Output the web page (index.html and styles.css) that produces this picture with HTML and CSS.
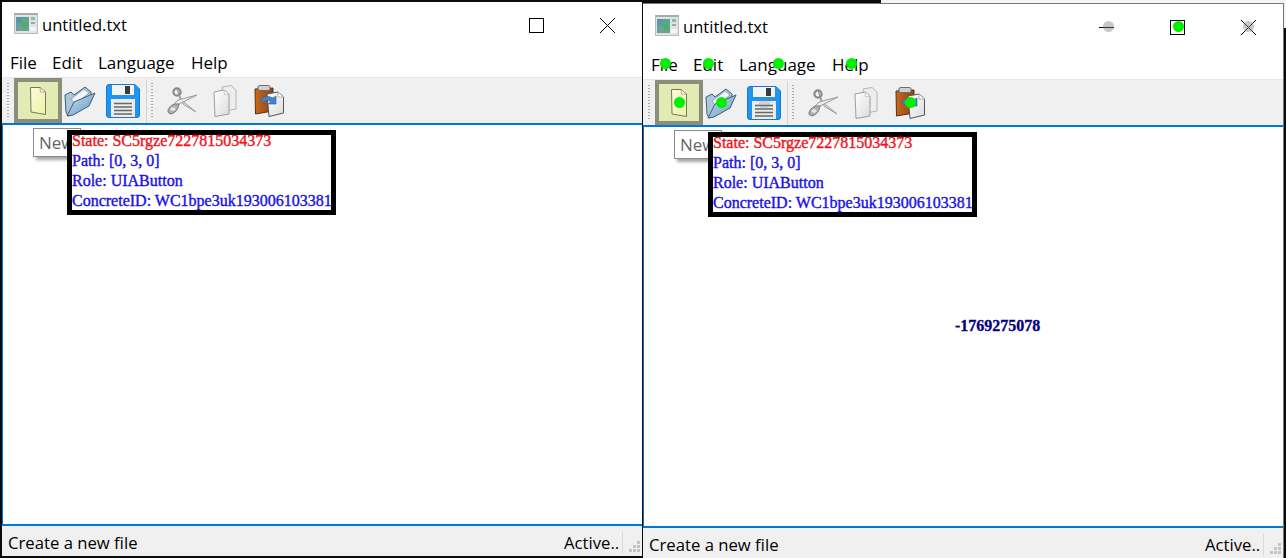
FILE: index.html
```html
<!DOCTYPE html>
<html lang="en">
<head>
<meta charset="utf-8">
<title>untitled.txt</title>
<link rel="stylesheet" href="styles.css">
</head>
<body>
<svg class="defs" width="0" height="0" aria-hidden="true">
  <defs>
    <linearGradient id="gDoc" x1="0" y1="0" x2="1" y2="1"><stop offset="0" stop-color="#fbfbd8"/><stop offset="1" stop-color="#eef0a8"/></linearGradient>
    <linearGradient id="gFolder" x1="0" y1="0" x2="1" y2="1"><stop offset="0" stop-color="#cfe3f0"/><stop offset="1" stop-color="#5f97bf"/></linearGradient>
    <linearGradient id="gWhite" x1="0" y1="0" x2="1" y2="1"><stop offset="0" stop-color="#ffffff"/><stop offset="1" stop-color="#dcdcdc"/></linearGradient>
    <linearGradient id="gWood" x1="0" y1="0" x2="1" y2="0"><stop offset="0" stop-color="#c9691f"/><stop offset="1" stop-color="#8a4316"/></linearGradient>
    <symbol id="i-app" viewBox="0 0 24 21">
      <rect x="0.5" y="0.5" width="23" height="20" fill="#dfe3e3" stroke="#b9bfbf"/>
      <rect x="0" y="0" width="24" height="2" fill="#a5adad"/>
      <rect x="2" y="4" width="13" height="14" fill="#5fa58f"/>
      <rect x="2" y="4" width="6" height="6" fill="#5a97a8"/>
      <rect x="8" y="9" width="5" height="6" fill="#4fae65"/>
      <rect x="4" y="13" width="5" height="5" fill="#7d9c9a"/>
      <rect x="17" y="4" width="4" height="3" fill="#8fbf9a"/>
      <rect x="17" y="9" width="4" height="2" fill="#a0a8a8"/>
      <rect x="16" y="14" width="6" height="4" fill="#f4f6f6"/>
    </symbol>
    <symbol id="i-new" viewBox="0 0 20 30">
      <path d="M2.5 1.5 L12 1.5 L17.5 6 L17.5 28.5 L3 26 Z" fill="url(#gDoc)" stroke="#77775a" stroke-width="1"/>
      <path d="M12 1.5 L12.5 6 L17.5 6 Z" fill="#fff" stroke="#9a9a80" stroke-width="0.8"/>
    </symbol>
    <symbol id="i-open" viewBox="0 0 32 32">
      <path d="M2 27 L1 10 L7 7 L10 10 L21 2 L27 7 L27 14 L10 29 L4 31 Z" fill="#a9c8dc" stroke="#3f5f77" stroke-width="1"/>
      <path d="M7 14 L20 4 L25 8 L11 19 Z" fill="#f4f7f9" stroke="#7f98a8" stroke-width="0.8"/>
      <path d="M3 31 L10 17 L31 8 L25 21 L9 30 Z" fill="url(#gFolder)" stroke="#3f5f77" stroke-width="1"/>
    </symbol>
    <symbol id="i-save" viewBox="0 0 34 34">
      <path d="M3 0.5 L29 0.5 L33.5 5 L33.5 31 Q33.5 33.5 31 33.5 L3 33.5 Q0.5 33.5 0.5 31 L0.5 3 Q0.5 0.5 3 0.5 Z" fill="#1f94f0" stroke="#1b78c8"/>
      <rect x="6" y="1" width="22" height="10" fill="#f3f3f3"/>
      <rect x="19" y="2" width="5" height="8" fill="#3a3a3a"/>
      <rect x="5" y="15" width="24" height="18" fill="#ececec"/>
      <path d="M8 19.5 H26 M8 23 H26 M8 26.500 H26 M8 30 H26" stroke="#666" stroke-width="1.4"/>
    </symbol>
    <symbol id="i-cut" viewBox="0 0 32 28">
      <path d="M11 1 L14 12 L30 25 L17 17 Z" fill="#e4e4e4" stroke="#9a9a9a"/>
      <path d="M31 8 L13 17 L6 19 L12 13 Z" fill="#eeeeee" stroke="#9a9a9a"/>
      <circle cx="11" cy="5" r="3.6" fill="none" stroke="#8a8a8a" stroke-width="2.2"/>
      <path d="M2 23 Q5 16 13 17 Q12 25 5 27 Q1 26 2 23 Z" fill="#b0b0b0" stroke="#7c7c7c"/>
      <ellipse cx="7" cy="22" rx="2.6" ry="1.8" fill="#e8e8e8"/>
    </symbol>
    <symbol id="i-copy" viewBox="0 0 24 32">
      <path d="M9 2 L18 0.5 L23 5 L23 24 L12 26 Z" fill="#ededed" stroke="#b4b4b4"/>
      <path d="M1 7 L11 5 L16 9 L16 29 L2 31.5 Z" fill="url(#gWhite)" stroke="#9c9c9c"/>
      <path d="M11 5 L11.5 9.5 L16 9 Z" fill="#fff" stroke="#b4b4b4" stroke-width="0.7"/>
    </symbol>
    <symbol id="i-paste" viewBox="0 0 30 32">
      <path d="M1 4 L19 3 L19 26 L1.5 29 Z" fill="url(#gWood)" stroke="#5b3010"/>
      <rect x="4" y="0.5" width="12" height="5" rx="1.5" fill="#cfcfcf" stroke="#6a6a6a"/>
      <path d="M13 9 L24 7 L29.5 12 L29.5 28 L15 31.5 Z" fill="url(#gWhite)" stroke="#555"/>
      <path d="M24 7 L24 12 L29.5 12 Z" fill="#fff" stroke="#999" stroke-width="0.7"/>
      <path d="M7 15 Q12 9 19 13 L22 11 L22 19 L14 19 L17 16.500 Q12 14 9 18 Z" fill="#3f86cf" stroke="#2a5e98" stroke-width="0.6"/>
    </symbol>
    <symbol id="i-sgrip" viewBox="0 0 12 12">
      <path d="M8 0h3v3H8zM4 4h3v3H4zM8 4h3v3H8zM0 8h3v3H0zM4 8h3v3H4zM8 8h3v3H8z" fill="#c4c4c4"/>
    </symbol>
  </defs>
</svg>

<i class="edge-top"></i>
<i class="edge-corner"></i>

<section class="window win-left">
  <header class="titlebar">
    <svg class="app-icon"><use href="#i-app"/></svg>
    <span class="title">untitled.txt</span>
    <div class="controls">
      <span class="ctl-max"></span>
      <svg class="ctl-close" viewBox="0 0 15 15"><path d="M0 0L15 15M15 0L0 15" stroke="#000" stroke-width="1"/></svg>
    </div>
  </header>
  <nav class="menubar">
    <span class="m-file">File</span><span class="m-edit">Edit</span><span class="m-lang">Language</span><span class="m-help">Help</span>
  </nav>
  <div class="toolbar">
    <i class="grip"></i>
    <span class="tbtn active"><svg class="ic-new"><use href="#i-new"/></svg></span>
    <svg class="ic-open"><use href="#i-open"/></svg>
    <svg class="ic-save"><use href="#i-save"/></svg>
    <i class="sep"></i>
    <i class="grip grip2"></i>
    <svg class="ic-cut"><use href="#i-cut"/></svg>
    <svg class="ic-copy"><use href="#i-copy"/></svg>
    <svg class="ic-paste"><use href="#i-paste"/></svg>
  </div>
  <main class="content"></main>
  <footer class="statusbar">
    <span class="status-text">Create a new file</span>
    <span class="status-active">Active..</span>
    <svg class="status-grip"><use href="#i-sgrip"/></svg>
  </footer>
  <div class="tooltip">New</div>
  <div class="info">
    <div class="red">State: SC5rgze7227815034373</div>
    <div>Path: [0, 3, 0]</div>
    <div>Role: UIAButton</div>
    <div>ConcreteID: WC1bpe3uk193006103381</div>
  </div>
</section>

<section class="window win-right">
  <header class="titlebar">
    <svg class="app-icon"><use href="#i-app"/></svg>
    <span class="title">untitled.txt</span>
    <div class="controls">
      <span class="ctl-min"></span>
      <span class="ctl-max"></span>
      <svg class="ctl-close" viewBox="0 0 15 15"><path d="M0 0L15 15M15 0L0 15" stroke="#000" stroke-width="1"/></svg>
    </div>
  </header>
  <nav class="menubar">
    <span class="m-file">File</span><span class="m-edit">Edit</span><span class="m-lang">Language</span><span class="m-help">Help</span>
  </nav>
  <div class="toolbar">
    <i class="grip"></i>
    <span class="tbtn active"><svg class="ic-new"><use href="#i-new"/></svg></span>
    <svg class="ic-open"><use href="#i-open"/></svg>
    <svg class="ic-save"><use href="#i-save"/></svg>
    <i class="sep"></i>
    <i class="grip grip2"></i>
    <svg class="ic-cut"><use href="#i-cut"/></svg>
    <svg class="ic-copy"><use href="#i-copy"/></svg>
    <svg class="ic-paste"><use href="#i-paste"/></svg>
  </div>
  <main class="content"></main>
  <footer class="statusbar">
    <span class="status-text">Create a new file</span>
    <span class="status-active">Active..</span>
    <svg class="status-grip"><use href="#i-sgrip"/></svg>
  </footer>
  <div class="tooltip">New</div>
  <div class="info">
    <div class="red">State: SC5rgze7227815034373</div>
    <div>Path: [0, 3, 0]</div>
    <div>Role: UIAButton</div>
    <div>ConcreteID: WC1bpe3uk193006103381</div>
  </div>
  <i class="dot gray d-min"></i>
  <i class="dot d-max"></i>
  <i class="dot gray d-close"></i>
  <i class="dot d-file"></i>
  <i class="dot d-edit"></i>
  <i class="dot d-lang"></i>
  <i class="dot d-help"></i>
  <i class="dot d-new"></i>
  <i class="dot d-open"></i>
  <i class="dot faint d-save"></i>
  <i class="dot d-paste"></i>
  <div class="reward">-1769275078</div>
</section>
</body>
</html>
```
FILE: styles.css
```css
* { box-sizing: border-box; }
html, body { margin: 0; padding: 0; }
body {
  width: 1286px;
  height: 558px;
  position: relative;
  overflow: hidden;
  background: #0b0b0b;
  font-family: "Open Sans", "Liberation Sans", sans-serif;
}
.defs { position: absolute; }
.edge-top {
  position: absolute;
  left: 881px;
  top: 0;
  width: 391px;
  height: 3px;
  background: #f4f4f4;
}
.edge-corner {
  position: absolute;
  left: 1272px;
  top: 0;
  width: 14px;
  height: 28px;
  background: #f4f4f4;
}

.window {
  position: absolute;
  width: 640px;
  height: 554px;
  display: flex;
  flex-direction: column;
  background: #fff;
  color: #000;
}
.win-left { left: 2px; top: 2px; }
.win-right { left: 643px; top: 4px; box-shadow: 0 -1px 0 #777, 1px -1px 0 #777, 1px 0 0 #777; }

.titlebar {
  height: 46px;
  flex: none;
  display: flex;
  align-items: center;
  padding: 0 27px 2px 12px;
}
.app-icon { width: 24px; height: 21px; margin-top: -1px; }
.title { margin-left: 4px; font-size: 16.6px; }
.controls { margin-left: auto; display: flex; align-items: center; gap: 56px; padding-top: 2px; }
.ctl-max { width: 15px; height: 15px; border: 1px solid #000; display: block; }
.ctl-close { width: 15px; height: 15px; display: block; }
.ctl-min { width: 15px; height: 1px; background: #000; display: block; }

.menubar {
  height: 29px;
  flex: none;
  display: flex;
  align-items: center;
  font-size: 17px;
  padding-left: 8px;
}
.m-file { width: 42px; }
.m-edit { width: 46px; }
.m-lang { width: 93px; }

.toolbar {
  height: 46px;
  flex: none;
  display: flex;
  align-items: center;
  background: #f0f0f0;
  border-top: 1px solid #e6e6e6;
  padding-left: 5px;
}
.grip {
  width: 2px;
  height: 36px;
  background: repeating-linear-gradient(to bottom, #a9a9a9 0 1px, transparent 1px 3px);
}
.tbtn {
  width: 48px;
  height: 45px;
  margin-left: 5px;
  display: flex;
  align-items: center;
  justify-content: center;
}
.tbtn.active { background: #e3ebb5; border: 4px solid #8b8e78; }
.ic-new { width: 20px; height: 30px; }
.ic-open { width: 32px; height: 32px; margin-left: 2px; }
.ic-save { width: 34px; height: 34px; margin-left: 10px; }
.sep { width: 1px; height: 44px; background: #d4d4d4; margin-left: 6px; }
.grip2 { margin-left: 4px; }
.ic-cut { width: 32px; height: 28px; margin-left: 13px; }
.ic-copy { width: 24px; height: 32px; margin-left: 15px; }
.ic-paste { width: 30px; height: 32px; margin-left: 17px; }

.content {
  flex: 1;
  border-top: 2px solid #0078d7;
  border-bottom: 2px solid #0078d7;
  border-left: 1px solid #0078d7;
  background: #fff;
}

.statusbar {
  height: 30px;
  flex: none;
  display: flex;
  align-items: center;
  background: #f0f0f0;
  font-size: 16.7px;
  padding-left: 6px;
  position: relative;
}
.status-text { padding-top: 3px; }
.status-active {
  margin-left: auto;
  width: 58px;
  height: 24px;
  margin-right: 20px;
  margin-top: 3px;
  line-height: 24px;
  box-shadow: 2px 0 0 -1px #d9d9d9;
}
.status-grip { position: absolute; right: 1px; bottom: 3px; width: 12px; height: 12px; }

.tooltip {
  position: absolute;
  left: 31px;
  top: 126px;
  width: 48px;
  height: 29px;
  padding: 2px 0 0 5px;
  font-size: 17px;
  color: #666;
  background: #fff;
  border: 1px solid #8a8a8a;
  box-shadow: 3px 3px 3px rgba(0, 0, 0, 0.35);
}

.info {
  position: absolute;
  left: 65px;
  top: 128px;
  width: 269px;
  height: 85px;
  border: 5px solid #000;
  background: #fff;
  font-family: "Liberation Serif", serif;
  font-size: 16px;
  line-height: 20px;
  color: #1a12e6;
  white-space: nowrap;
  -webkit-text-stroke: 0.4px currentColor;
}
.info .red { color: #f0141e; margin-top: -4px; }

.dot {
  position: absolute;
  width: 11px;
  height: 11px;
  border-radius: 50%;
  background: #00f000;
}
.dot.gray { background: rgba(130, 130, 130, 0.45); }
.dot.faint { background: rgba(130, 130, 130, 0.25); }
.d-min { left: 460px; top: 17px; }
.d-max { left: 530px; top: 17px; }
.d-close { left: 600px; top: 17px; }
.d-file { left: 17px; top: 54px; }
.d-edit { left: 60px; top: 54px; }
.d-lang { left: 130px; top: 54px; }
.d-help { left: 203px; top: 54px; }
.d-new { left: 31px; top: 93px; }
.d-open { left: 73px; top: 93px; }
.d-save { left: 116px; top: 94px; }
.d-paste { left: 262px; top: 93px; }

.reward {
  position: absolute;
  left: 312px;
  top: 313px;
  font-family: "Liberation Serif", serif;
  font-size: 16px;
  font-weight: 700;
  color: #00008b;
  -webkit-text-stroke: 0.3px currentColor;
}
```
